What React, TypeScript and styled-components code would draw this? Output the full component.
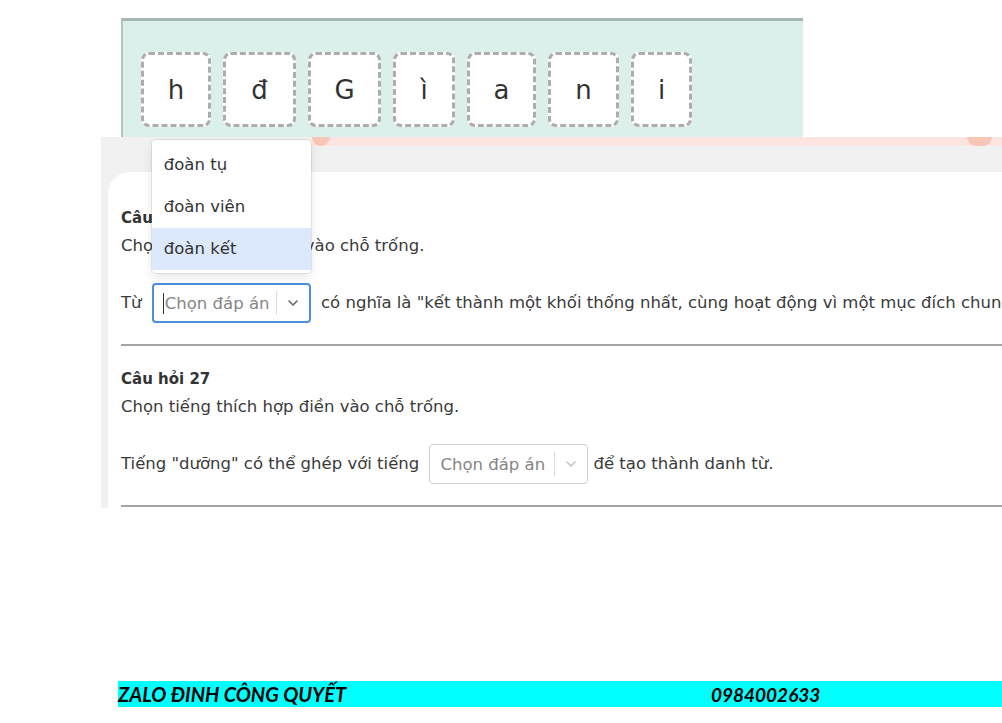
import React from 'react';
import styled, { createGlobalStyle } from 'styled-components';

const GlobalStyle = createGlobalStyle`
  html, body {
    margin: 0;
    padding: 0;
    background: #fff;
  }
  body {
    font-family: 'DejaVu Sans', Verdana, sans-serif;
    color: #3a3a3a;
  }
`;

const Page = styled.div`
  width: 1002px;
  height: 723px;
  box-sizing: border-box;
  padding-top: 18px;
  overflow: hidden;
`;

/* Letter scramble board */
const LetterPanel = styled.div`
  margin-left: 121px;
  width: 682px;
  height: 119px;
  box-sizing: border-box;
  background: #dcf0eb;
  border-top: 3px solid #a9b7b4;
  border-left: 2px solid #b3c5c1;
  padding: 31px 0 0 18px;
  display: flex;
  align-items: flex-start;
  gap: 12px;
`;

const Tile = styled.div<{ $w: number }>`
  width: ${({ $w }) => $w}px;
  height: 75px;
  box-sizing: border-box;
  background: #fff;
  border: 3px dashed #adadad;
  border-radius: 8px;
  display: flex;
  align-items: center;
  justify-content: center;
  font-size: 26px;
  color: #333;
`;

/* Quiz sheet */
const Sheet = styled.section`
  margin-left: 101px;
  width: 901px;
  height: 371px;
  background: #f1f1f1;
  overflow: hidden;
  display: flex;
  flex-direction: column;
`;

const Track = styled.div`
  margin-left: 211px;
  height: 9px;
  display: flex;
  background: #fde4e1;
`;

const TrackCap = styled.div<{ $w: number }>`
  width: ${({ $w }) => $w}px;
  background: #f7c6b6;
  border-radius: 0 0 9px 9px;
`;

const TrackFill = styled.div`
  flex: 1;
`;

const TrackTail = styled.div`
  width: 10px;
`;

const Card = styled.div`
  margin: 26px 0 0 7px;
  flex: 1;
  background: #fff;
  border-top-left-radius: 22px;
  padding: 13px 0 0 13px;
`;

const Question = styled.div`
  padding: 21px 0 21px;
  border-bottom: 2px solid #a3a3a3;
  font-size: 16.5px;
`;

const Heading = styled.div`
  font-size: 15px;
  font-weight: bold;
  line-height: 24px;
  color: #333;
`;

const Prompt = styled.div`
  margin-top: 2px;
  line-height: 28px;
`;

const Row = styled.div`
  margin-top: 23px;
  height: 40px;
  line-height: 40px;
  white-space: nowrap;
`;

const Select = styled.span<{ $focused?: boolean }>`
  position: relative;
  display: inline-flex;
  align-items: center;
  vertical-align: top;
  width: 159px;
  height: 40px;
  box-sizing: border-box;
  margin: 0 5px;
  border: ${({ $focused }) => ($focused ? '2px solid #4a8fdc' : '1px solid #cfcfcf')};
  border-radius: 4px;
  background: #fff;
  line-height: normal;
`;

const Value = styled.span<{ $focused?: boolean }>`
  flex: 1;
  display: flex;
  align-items: center;
  padding-left: ${({ $focused }) => ($focused ? 9 : 10)}px;
  color: #858585;
`;

const Caret = styled.span`
  width: 1px;
  height: 21px;
  margin-right: 1px;
  background: #333;
`;

const Separator = styled.span`
  width: 1px;
  height: 24px;
  background: #dcdcdc;
`;

const Indicator = styled.span`
  width: 32px;
  display: flex;
  align-items: center;
  justify-content: center;
`;

const Menu = styled.div`
  position: absolute;
  left: -2px;
  bottom: calc(100% + 12px);
  width: 159px;
  box-sizing: border-box;
  padding: 4px 0 3px;
  background: #fff;
  border-radius: 4px;
  box-shadow: 0 0 0 1px rgba(0, 0, 0, 0.07), 0 4px 11px rgba(0, 0, 0, 0.1);
  z-index: 5;
`;

const Option = styled.div<{ $active?: boolean }>`
  height: 42px;
  line-height: 42px;
  padding-left: 12px;
  color: #333;
  background: ${({ $active }) => ($active ? '#dce8fb' : 'transparent')};
`;

const Footer = styled.footer`
  margin: 173px 0 0 118px;
  height: 26px;
  background: #00ffff;
  display: flex;
  align-items: center;
  font-family: Lato, 'Open Sans', sans-serif;
  font-style: italic;
  font-weight: 700;
  color: #000;
  white-space: nowrap;
`;

const FooterName = styled.span`
  width: 593px;
  font-size: 20px;
`;

const FooterPhone = styled.span`
  font-size: 19px;
`;

const Chevron: React.FC<{ color: string }> = ({ color }) => (
  <svg width="10" height="6" viewBox="0 0 10 6">
    <path d="M1 1 L5 5 L9 1" fill="none" stroke={color} strokeWidth="1.6" strokeLinecap="round" strokeLinejoin="round" />
  </svg>
);

const tiles = [
  { ch: 'h', w: 70 },
  { ch: 'đ', w: 73 },
  { ch: 'G', w: 73 },
  { ch: 'ì', w: 62 },
  { ch: 'a', w: 69 },
  { ch: 'n', w: 71 },
  { ch: 'i', w: 61 },
];

const options = ['đoàn tụ', 'đoàn viên', 'đoàn kết'];

export default function App() {
  return (
    <Page>
      <GlobalStyle />
      <LetterPanel>
        {tiles.map((t, i) => (
          <Tile key={i} $w={t.w}>{t.ch}</Tile>
        ))}
      </LetterPanel>

      <Sheet>
        <Track>
          <TrackCap $w={18} />
          <TrackFill />
          <TrackCap $w={25} />
          <TrackTail />
        </Track>
        <Card>
          <Question>
            <Heading>Câu hỏi 26</Heading>
            <Prompt>Chọn từ phù hợp điền vào chỗ trống.</Prompt>
            <Row>
              Từ{' '}
              <Select $focused>
                <Menu>
                  {options.map((o, i) => (
                    <Option key={o} $active={i === options.length - 1}>{o}</Option>
                  ))}
                </Menu>
                <Value $focused>
                  <Caret />
                  Chọn đáp án
                </Value>
                <Separator />
                <Indicator>
                  <Chevron color="#666" />
                </Indicator>
              </Select>{' '}
              có nghĩa là "kết thành một khối thống nhất, cùng hoạt động vì một mục đích chung".
            </Row>
          </Question>
          <Question>
            <Heading>Câu hỏi 27</Heading>
            <Prompt>Chọn tiếng thích hợp điền vào chỗ trống.</Prompt>
            <Row>
              Tiếng "dưỡng" có thể ghép với tiếng{' '}
              <Select>
                <Value>Chọn đáp án</Value>
                <Separator />
                <Indicator>
                  <Chevron color="#c4c4c4" />
                </Indicator>
              </Select>
              để tạo thành danh từ.
            </Row>
          </Question>
        </Card>
      </Sheet>

      <Footer>
        <FooterName>ZALO ĐINH CÔNG QUYẾT</FooterName>
        <FooterPhone>0984002633</FooterPhone>
      </Footer>
    </Page>
  );
}
